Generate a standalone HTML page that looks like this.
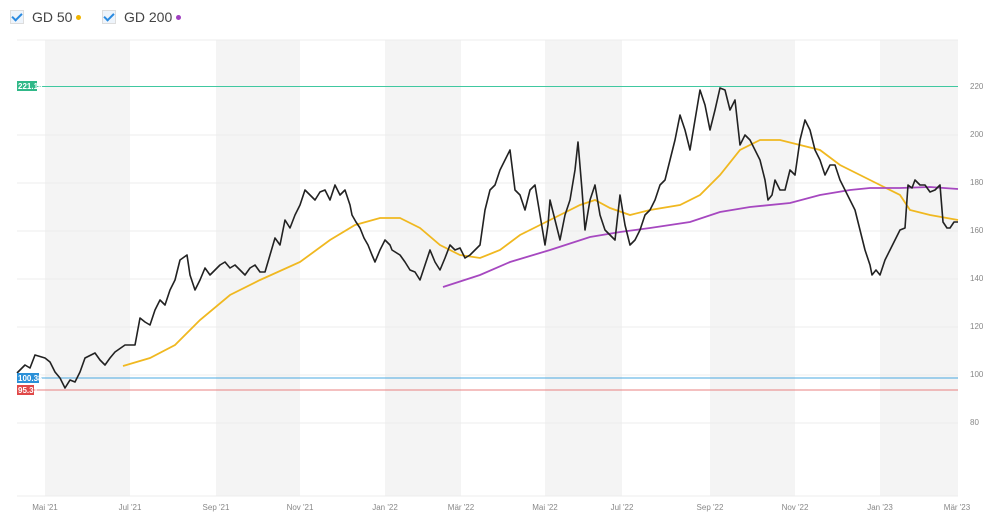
<!DOCTYPE html><html><head><style>
body{margin:0;background:#fff;font-family:"Liberation Sans",sans-serif;}
.leg{position:absolute;top:9px;font-size:14px;color:#444;display:flex;align-items:center}
.cb{width:12px;height:12px;border:1px solid #ddd;background:#eef4fb;margin-right:8px;position:relative}
.cb:after{content:"";position:absolute;left:3px;top:0px;width:4px;height:8px;border:solid #2a8ae0;border-width:0 2px 2px 0;transform:rotate(45deg)}
.dot{width:5px;height:5px;border-radius:50%;margin-left:4px}
</style></head><body>
<div class="leg" style="left:10px"><div class="cb"></div>GD 50<div class="dot" style="background:#f0b400"></div></div>
<div class="leg" style="left:102px"><div class="cb"></div>GD 200<div class="dot" style="background:#a040c0"></div></div>
<svg width="1000" height="521" style="position:absolute;left:0;top:0" font-family="Liberation Sans" font-size="8" fill="#888">
<g fill="#f4f4f4">
<rect x="45" y="40" width="85" height="456"/><rect x="216" y="40" width="84" height="456"/><rect x="385" y="40" width="76" height="456"/><rect x="545" y="40" width="77" height="456"/><rect x="710" y="40" width="85" height="456"/><rect x="880" y="40" width="78" height="456"/></g>
<g stroke="#ececec" stroke-width="1">
<line x1="17" x2="958" y1="40" y2="40"/><line x1="17" x2="958" y1="135" y2="135"/><line x1="17" x2="958" y1="183" y2="183"/><line x1="17" x2="958" y1="231" y2="231"/><line x1="17" x2="958" y1="279" y2="279"/><line x1="17" x2="958" y1="327" y2="327"/><line x1="17" x2="958" y1="375" y2="375"/><line x1="17" x2="958" y1="423" y2="423"/><line x1="17" x2="958" y1="496" y2="496"/></g>
<line x1="17" x2="958" y1="86.5" y2="86.5" stroke="#40c8a0"/>
<line x1="17" x2="958" y1="378" y2="378" stroke="#4aa8e0"/>
<line x1="17" x2="958" y1="390" y2="390" stroke="#e88080"/>
<g text-anchor="start"><text x="970" y="89">220</text><text x="970" y="137">200</text><text x="970" y="185">180</text><text x="970" y="233">160</text><text x="970" y="281">140</text><text x="970" y="329">120</text><text x="970" y="377">100</text><text x="970" y="425">80</text></g>
<g text-anchor="middle"><text x="45" y="510">Mai '21</text><text x="130" y="510">Jul '21</text><text x="216" y="510">Sep '21</text><text x="300" y="510">Nov '21</text><text x="385" y="510">Jan '22</text><text x="461" y="510">Mär '22</text><text x="545" y="510">Mai '22</text><text x="622" y="510">Jul '22</text><text x="710" y="510">Sep '22</text><text x="795" y="510">Nov '22</text><text x="880" y="510">Jan '23</text><text x="957" y="510">Mär '23</text></g>
<polyline fill="none" stroke="#f0b820" stroke-width="1.8" points="123,366 150,358 175,345 200,320 230,295 260,280 300,262 330,240 355,225 380,218 400,218 420,228 440,245 460,255 480,258 500,250 520,235 540,225 560,215 580,205 595,200 610,208 630,215 650,210 680,205 700,195 720,175 740,150 760,140 780,140 800,145 820,150 840,165 860,175 880,185 900,195 910,210 930,215 958,220"/>
<polyline fill="none" stroke="#a648c0" stroke-width="1.8" points="443,287 480,275 510,262 550,250 590,237 620,232 650,228 690,222 720,212 750,207 790,203 820,195 850,190 870,188 900,188 930,187 958,189"/>
<polyline fill="none" stroke="#222" stroke-width="1.6" stroke-linejoin="round" points="17,373 25,365 30,368 35,355 45,358 50,362 55,372 60,378 65,388 70,380 75,382 80,372 85,358 95,353 100,360 105,365 110,358 115,352 125,345 135,345 140,318 145,322 150,325 155,310 160,300 165,305 170,290 175,280 180,260 187,255 190,275 195,290 200,280 205,268 210,275 215,270 220,265 225,262 230,268 235,265 240,270 245,275 250,268 255,265 260,272 265,272 270,255 275,238 280,245 285,220 290,228 295,215 300,205 305,190 310,195 315,200 320,192 325,190 330,200 335,185 340,195 345,190 350,205 352,215 356,222 360,228 364,238 368,245 372,255 375,262 380,250 385,240 390,245 392,250 400,255 405,262 410,270 415,272 420,280 425,265 430,250 435,262 440,270 445,258 450,245 455,250 460,248 465,258 470,255 475,250 480,245 485,210 490,190 495,185 500,170 505,160 510,150 515,190 520,195 525,210 530,190 535,185 540,215 545,245 548,225 550,200 555,220 560,240 565,215 570,200 575,170 578,142 582,190 585,230 590,200 595,185 600,215 605,230 610,235 615,240 620,195 625,225 630,245 635,240 640,230 645,215 650,210 655,200 660,185 665,180 670,160 675,140 680,115 685,130 690,150 695,120 700,90 705,105 710,130 715,110 720,88 725,90 730,110 735,100 740,145 745,135 750,140 755,150 760,160 765,180 768,200 772,195 775,180 780,190 785,190 790,170 795,175 800,140 805,120 810,130 815,150 820,160 825,175 830,165 835,165 840,180 845,190 850,200 855,210 860,230 865,250 870,265 872,275 876,270 880,275 885,260 890,250 895,240 900,230 905,228 908,185 912,188 915,180 920,185 925,185 930,192 935,190 940,185 943,222 947,228 950,228 954,222 958,222"/>
<g font-size="8" fill="#fff" font-weight="bold">
<rect x="17" y="81" width="20" height="10" fill="#30b888"/><text x="18" y="89">221.18</text>
<rect x="17" y="373" width="22" height="10" fill="#2a90d8"/><text x="18" y="381">100.38</text>
<rect x="17" y="385" width="17" height="10" fill="#e04848"/><text x="18" y="393">95.31</text></g>
</svg>
</body></html>
